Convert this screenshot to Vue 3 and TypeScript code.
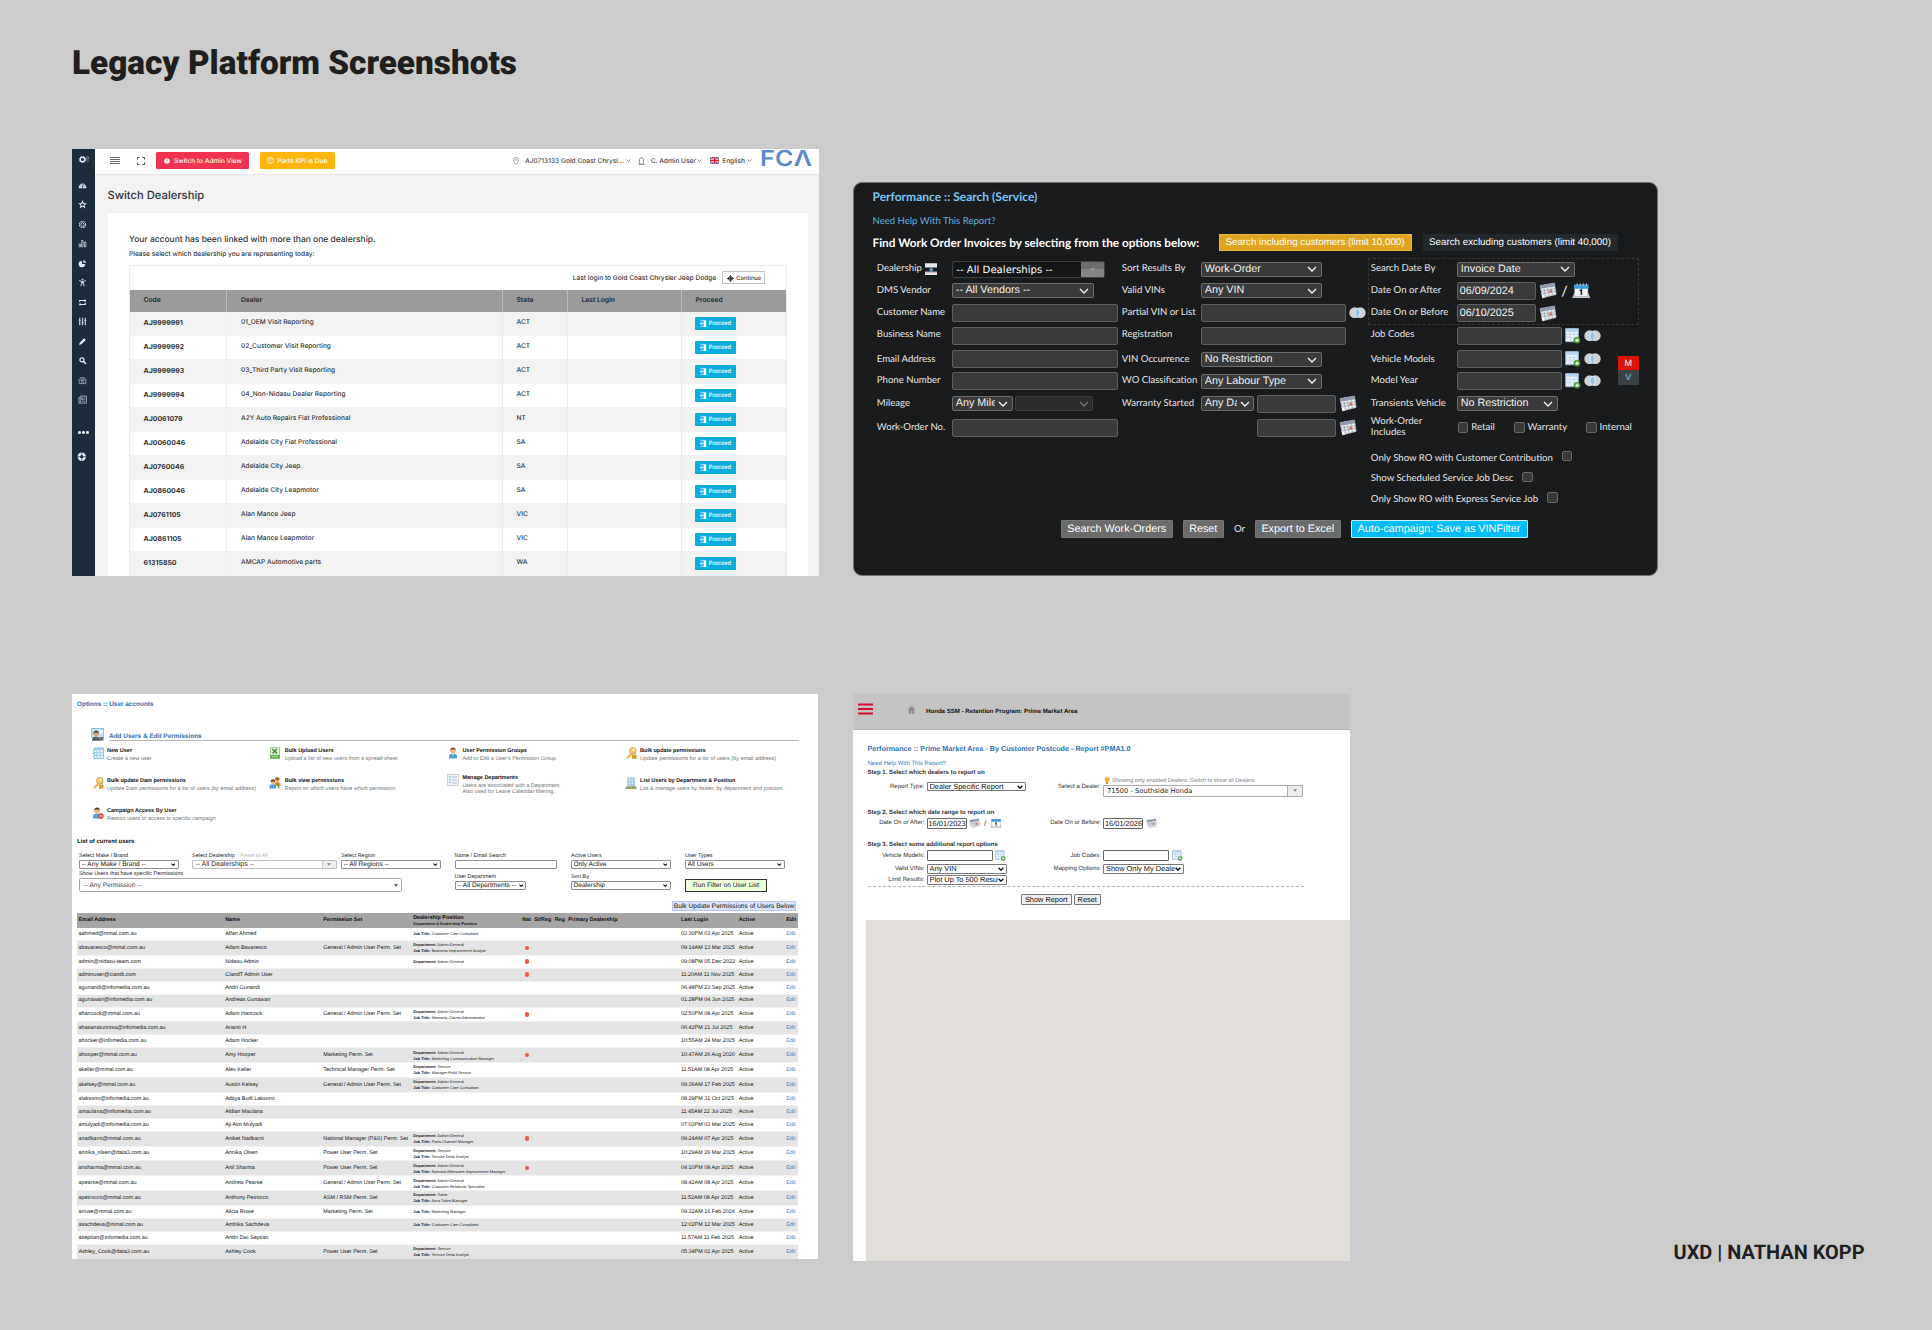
<script setup lang="ts">
interface Dealer { code: string; name: string; state: string }
interface User {
  email: string
  name: string
  perm?: string
  dept?: string
  job?: string
  nat?: boolean
  login: string
}
interface Tool { icon: string; title: string; lines: string[] }

const sideIcons: string[] = [
  'gauge', 'star', 'aperture', 'bars', 'pie', 'person', 'repeat', 'sliders', 'pencil', 'search', 'card', 'news',
]

const dealers: Dealer[] = [
  { code: 'AJ9999991', name: '01_OEM Visit Reporting', state: 'ACT' },
  { code: 'AJ9999992', name: '02_Customer Visit Reporting', state: 'ACT' },
  { code: 'AJ9999993', name: '03_Third Party Visit Reporting', state: 'ACT' },
  { code: 'AJ9999994', name: '04_Non-Nidasu Dealer Reporting', state: 'ACT' },
  { code: 'AJ0061079', name: 'A2Y Auto Repairs Fiat Professional', state: 'NT' },
  { code: 'AJ0060046', name: 'Adelaide City Fiat Professional', state: 'SA' },
  { code: 'AJ0760046', name: 'Adelaide City Jeep', state: 'SA' },
  { code: 'AJ0860046', name: 'Adelaide City Leapmotor', state: 'SA' },
  { code: 'AJ0761105', name: 'Alan Mance Jeep', state: 'VIC' },
  { code: 'AJ0861105', name: 'Alan Mance Leapmotor', state: 'VIC' },
  { code: '61315850', name: 'AMCAP Automotive parts', state: 'WA' },
]

const tools: Tool[] = [
  { icon: 'newuser', title: 'New User', lines: ['Create a new user'] },
  { icon: 'xls', title: 'Bulk Upload Users', lines: ['Upload a list of new users from a spread-sheet'] },
  { icon: 'user', title: 'User Permission Groups', lines: ["Add or Edit a User's Permission Group"] },
  { icon: 'key', title: 'Bulk update permissions', lines: ['Update permissions for a list of users (by email address)'] },
  { icon: 'key', title: 'Bulk update Dam permissions', lines: ['Update Dam permissions for a list of users (by email address)'] },
  { icon: 'group', title: 'Bulk view permissions', lines: ['Report on which users have which permission'] },
  { icon: 'list', title: 'Manage Departments', lines: ['Users are associated with a Department.', 'Also used for Leave Calendar filtering.'] },
  { icon: 'building', title: 'List Users by Department & Position', lines: ['List & manage users by dealer, by department and position.'] },
  { icon: 'restrict', title: 'Campaign Access By User', lines: ['Restrict users to access to specific campaign'] },
]

const gen = 'General / Admin User Perm. Set'
const users: User[] = [
  { email: 'aahmed@mmal.com.au', name: 'Affan Ahmed', job: 'Customer Care Consultant', login: '03:30PM 03 Apr 2025' },
  { email: 'abavaresco@mmal.com.au', name: 'Adam Bavaresco', perm: gen, dept: 'Admin-General', job: 'Business Improvement Analyst', nat: true, login: '09:14AM 13 Mar 2025' },
  { email: 'admin@nidasu-team.com', name: 'Nidasu Admin', dept: 'Admin-General', nat: true, login: '09:08PM 05 Dec 2022' },
  { email: 'adminuser@ciandt.com', name: 'CIandT Admin User', nat: true, login: '11:20AM 11 Nov 2025' },
  { email: 'agunandi@infomedia.com.au', name: 'Andri Gunandi', login: '06:48PM 23 Sep 2025' },
  { email: 'agunawan@infomedia.com.au', name: 'Andreas Gunawan', login: '01:28PM 04 Jun 2025' },
  { email: 'ahancock@mmal.com.au', name: 'Adam Hancock', perm: gen, dept: 'Admin-General', job: 'Warranty Claims Administrator', nat: true, login: '02:50PM 08 Apr 2025' },
  { email: 'ahasanatunnisa@infomedia.com.au', name: 'Arianti H', login: '06:42PM 21 Jul 2025' },
  { email: 'ahocker@infomedia.com.au', name: 'Adam Hocker', login: '10:55AM 24 Mar 2025' },
  { email: 'ahooper@mmal.com.au', name: 'Amy Hooper', perm: 'Marketing Perm. Set', dept: 'Admin-General', job: 'Marketing Communication Manager', nat: true, login: '10:47AM 26 Aug 2020' },
  { email: 'akeller@mmal.com.au', name: 'Alex Keller', perm: 'Technical Manager Perm. Set', dept: 'Service', job: 'Manager Field Service', login: '11:51AM 08 Apr 2025' },
  { email: 'akelsey@mmal.com.au', name: 'Austin Kelsey', perm: gen, dept: 'Admin-General', job: 'Customer Care Consultant', login: '09:36AM 17 Feb 2025' },
  { email: 'alaksono@infomedia.com.au', name: 'Aditya Budi Laksono', login: '08:29PM 31 Oct 2025' },
  { email: 'amaulana@infomedia.com.au', name: 'Aldian Maulana', login: '11:45AM 22 Jul 2025' },
  { email: 'amulyadi@infomedia.com.au', name: 'Aji Atin Mulyadi', login: '07:03PM 03 Mar 2025' },
  { email: 'anadkarni@mmal.com.au', name: 'Aniket Nadkarni', perm: 'National Manager (P&S) Perm. Set', dept: 'Admin-General', job: 'Parts Channel Manager', nat: true, login: '09:24AM 07 Apr 2025' },
  { email: 'annika_olsen@data3.com.au', name: 'Annika Olsen', perm: 'Power User Perm. Set', dept: 'Service', job: 'Service Desk Analyst', login: '10:29AM 26 Mar 2025' },
  { email: 'ansharma@mmal.com.au', name: 'Anil Sharma', perm: 'Power User Perm. Set', dept: 'Admin-General', job: 'National Aftersales Improvement Manager', nat: true, login: '04:10PM 08 Apr 2025' },
  { email: 'apearse@mmal.com.au', name: 'Andrew Pearse', perm: gen, dept: 'Admin-General', job: 'Customer Relations Specialist', login: '08:42AM 08 Apr 2025' },
  { email: 'apetrocco@mmal.com.au', name: 'Anthony Petrocco', perm: 'ASM / RSM Perm. Set', dept: 'Sales', job: 'Area Sales Manager', login: '11:52AM 08 Apr 2025' },
  { email: 'arowe@mmal.com.au', name: 'Alicia Rowe', perm: 'Marketing Perm. Set', job: 'Marketing Manager', login: '09:32AM 16 Feb 2024' },
  { email: 'asachdeva@mmal.com.au', name: 'Ambika Sachdeva', job: 'Customer Care Consultant', login: '12:02PM 12 Mar 2025' },
  { email: 'aseptian@infomedia.com.au', name: 'Andri Dwi Septian', login: '11:57AM 11 Feb 2025' },
  { email: 'Ashley_Cook@data3.com.au', name: 'Ashley Cook', perm: 'Power User Perm. Set', dept: 'Service', job: 'Service Desk Analyst', login: '05:34PM 02 Apr 2025' },
]
</script>

<template>
  <svg class="defs" width="0" height="0" aria-hidden="true">
    <symbol id="chev" viewBox="0 0 10 6"><path d="M1 1l4 4 4-4" fill="none" stroke="currentColor" stroke-width="1.4" /></symbol>
    <symbol id="chevb" viewBox="0 0 10 6"><path d="M1 1l4 4 4-4" fill="none" stroke="currentColor" stroke-width="2.3" /></symbol>
    <symbol id="tri" viewBox="0 0 6 4"><path d="M0 0h6L3 4z" fill="currentColor" /></symbol>
    <symbol id="gear" viewBox="0 0 24 16">
      <circle cx="9" cy="9" r="4.6" fill="none" stroke="#dfe5e8" stroke-width="3" />
      <circle cx="9" cy="9" r="6.6" fill="none" stroke="#dfe5e8" stroke-width="1.6" stroke-dasharray="2.6 2.6" />
      <circle cx="19" cy="5.5" r="2.4" fill="none" stroke="#93a1aa" stroke-width="1.6" />
      <circle cx="19" cy="11.5" r="1.8" fill="none" stroke="#6f808a" stroke-width="1.4" />
    </symbol>
    <symbol id="gauge" viewBox="0 0 16 16"><path d="M1 13a7 8.5 0 1 1 14 0z" fill="#d9dfe2" /><path d="M8 12L9 6M4 9h.5M11.500 9h.5M5.500 6h.5" stroke="#1b2d3a" stroke-width="1.700" /></symbol>
    <symbol id="star" viewBox="0 0 16 16"><path d="M8 2.500l1.600 3.700 4 .3-3 2.600 1 4L8 10.900l-3.600 2.200 1-4-3-2.600 4-.3z" fill="none" stroke="#d9dfe2" stroke-width="1.900" /></symbol>
    <symbol id="aperture" viewBox="0 0 16 16"><circle cx="8" cy="8" r="5.500" fill="none" stroke="#c3ccd1" stroke-width="2" stroke-dasharray="3.400 1" /><path d="M8 5l3 2-1 4H6L5 7z" fill="none" stroke="#c3ccd1" stroke-width="1.400" /></symbol>
    <symbol id="bars" viewBox="0 0 16 16"><path d="M2 9h2.500v5H2zM6.500 2.500h2.500V14H6.500zM11.500 5.500H14V14h-2.500z" fill="none" stroke="#d9dfe2" stroke-width="1.300" /></symbol>
    <symbol id="pie" viewBox="0 0 16 16"><path d="M7 3.500V9h6A6 5.500 0 1 1 7 3.500z" fill="#e6eaec" /><path d="M9 2a5.500 5.500 0 0 1 5.500 5.200H9z" fill="#aab5bb" /></symbol>
    <symbol id="person" viewBox="0 0 16 16"><circle cx="8" cy="2.600" r="1.700" fill="#d9dfe2" /><path d="M2 4.500l4.500 1.800h3L14 4.500M6.500 6.500v3l-1.500 5M9.500 6.500v3l1.500 5M8 6v4" fill="none" stroke="#d9dfe2" stroke-width="1.700" /></symbol>
    <symbol id="repeat" viewBox="0 0 16 16"><path d="M3 7V4.500h11M13 9v2.500H2M3.500 13.500V9.500M12.500 2.500v5" fill="none" stroke="#e3e8ea" stroke-width="2" /></symbol>
    <symbol id="sliders" viewBox="0 0 16 16"><path d="M3 1.500v13M8 1.500v13M13 1.500v13" stroke="#c3ccd1" stroke-width="2.200" /><path d="M1 6h4M6 10h4M11 6h4" stroke="#c3ccd1" stroke-width="1.500" /></symbol>
    <symbol id="pencil" viewBox="0 0 16 16"><path d="M2 14l1-3.800 8-8L14 5l-8 8z" fill="#eef1f2" /></symbol>
    <symbol id="search" viewBox="0 0 16 16"><circle cx="7" cy="7" r="3.600" fill="none" stroke="#e3e8ea" stroke-width="2.200" /><path d="M9.500 9.500L14 14" stroke="#e3e8ea" stroke-width="2.600" /></symbol>
    <symbol id="card" viewBox="0 0 16 16"><path d="M2 5.500h12v8H2zM4 3h8M5 8h6M5 10.800h6" fill="none" stroke="#a8b4bb" stroke-width="1.400" /></symbol>
    <symbol id="news" viewBox="0 0 16 16"><path d="M4 2h11v12.500H1.500V5H4zM4 5v9M6.500 5H9v3H6.500zM11 5h2M11 8h2M6.500 11H13" fill="none" stroke="#b5c0c6" stroke-width="1.400" /></symbol>
    <symbol id="buoy" viewBox="0 0 16 16"><circle cx="8" cy="8" r="5" fill="none" stroke="#eef1f2" stroke-width="4" /><path d="M8 1v4M8 11v4M1 8h4M11 8h4" stroke="#1b2d3a" stroke-width="1.200" /></symbol>
    <symbol id="cal" viewBox="0 0 18 17">
      <path d="M1 3.500L15.500 1l1.700 11.500L3.500 16z" fill="#e9ecef" stroke="#a9aeb5" stroke-width=".6" />
      <path d="M1 3.500L15.500 1l.5 3.200L1.500 6.800z" fill="#8d9bb0" />
      <path d="M2 9.300l14-2.600M2.800 12l13.800-3M5 6.500l1.500 8.500M8.500 5.800l1.500 8.300M12 5.200l1.500 8" stroke="#9aa1aa" stroke-width=".8" />
      <circle cx="11.600" cy="9.300" r="1.500" fill="#e0705c" />
      <path d="M3.500 16L2.500 11l3.500 4.300z" fill="#fff" />
    </symbol>
    <symbol id="cal1" viewBox="0 0 18 15">
      <path d="M0 14.700L2.500 9h13l2.500 5.700z" fill="#c4c8cc" />
      <path d="M2.500 2.500H15.500V13H2.500z" fill="#f7f9fa" stroke="#8c949c" stroke-width=".5" />
      <path d="M2 1.500H16v4H2z" fill="#3f9bd6" />
      <path d="M5 .3v2.400M8 .3v2.400M11 .3v2.400M14 .3v2.400" stroke="#dfe9f0" stroke-width=".8" />
      <path d="M7.500 7.700l1.700-1v5" fill="none" stroke="#222" stroke-width="1.500" />
    </symbol>
    <symbol id="sheet" viewBox="0 0 16 16">
      <path d="M.7.700h12.600v13H.7z" fill="#eaf3fb" stroke="#8fb4dc" stroke-width="1" />
      <path d="M.7.700h12.600v3H.7z" fill="#b7d2ee" />
      <path d="M1 6.500h12M1 9.200h12M5 3.700v10M9 3.700v10" stroke="#b9d1ea" stroke-width=".7" />
      <circle cx="12" cy="12.300" r="3.300" fill="#4c9a34" /><path d="M12 10.500v3.600M10.200 12.300h3.600" stroke="#fff" stroke-width="1.200" />
    </symbol>
    <symbol id="venn" viewBox="0 0 18 12"><circle cx="6" cy="6" r="5.700" fill="#cdd1d5" /><circle cx="12" cy="6" r="5.700" fill="#cdd1d5" /><path d="M9 1.200a5.700 5.700 0 0 1 0 9.600 5.700 5.700 0 0 1 0-9.600z" fill="#8fc4ee" stroke="#f2f4f6" stroke-width=".8" /></symbol>
    <symbol id="org" viewBox="0 0 12 12"><path d="M0 .3h12v4H0zM0 8.300h12v3.500H0z" fill="#e6e9ec" /><path d="M0 8.300h12v1H0z" fill="#d8a7a0" /><path d="M6 4v4.500M4.200 6.300h3.600" stroke="#5aa0dc" stroke-width="1.600" /></symbol>
    <symbol id="user" viewBox="0 0 12 12"><path d="M2 11.500V9c0-1.500 1.500-2.500 4-2.500S10 7.500 10 9v2.500z" fill="#4f9fe0" /><path d="M4.500 6.300L6 8.300l1.500-2z" fill="#fff" /><circle cx="6" cy="3.800" r="2.700" fill="#f0b982" /><path d="M3.200 4C3 1.500 4.500.4 6 .4S9 1.500 8.800 4L8 2.600H4.200z" fill="#7a4a1c" /></symbol>
    <symbol id="group" viewBox="0 0 12 12"><path d="M5.500 9V7c0-1.500 1.500-2 3-2s3 .8 3 2v2z" fill="#e79a2e" /><circle cx="8.300" cy="2.800" r="2.100" fill="#d9924e" /><path d="M6 2.500c0-1.500 1-2.300 2.300-2.300s2.400.8 2.300 2.300z" fill="#8a5a1c" /><path d="M.5 11.500V9.300c0-1.300 1.300-2 3.300-2s3.300.7 3.300 2v2.200z" fill="#4f9fe0" /><circle cx="3.900" cy="5" r="2.200" fill="#f0b982" /><path d="M1.600 4.800C1.500 3 2.600 2.300 3.900 2.300s2.500.8 2.300 2.500z" fill="#7a4a1c" /><path d="M8 6l2 5" stroke="#5b9a4a" stroke-width="1.500" /></symbol>
    <symbol id="key" viewBox="0 0 12 12"><path d="M6 5.500L1 10.500l1 1h1.500l3.800-4z" fill="#eebb55" /><circle cx="7.800" cy="3.800" r="3.400" fill="#f3c567" stroke="#d79b30" stroke-width=".6" /><circle cx="8.600" cy="3" r="1" fill="#fff" /><path d="M7 8h4.500v3.700H7z" fill="#d99a1d" /><path d="M8 8V6.700h2.500V8" fill="none" stroke="#999" stroke-width=".7" /></symbol>
    <symbol id="restrict" viewBox="0 0 12 12"><path d="M1 11.500V9c0-1.500 1.500-2.500 4-2.500S9 7.500 9 9v2.500z" fill="#4f9fe0" /><circle cx="5" cy="3.800" r="2.700" fill="#f0b982" /><path d="M2.200 4C2 1.500 3.500.4 5 .4S8 1.500 7.800 4L7 2.600H3.200z" fill="#5a3513" /><circle cx="9" cy="9" r="2.700" fill="#e2382b" /><path d="M7.500 9h3" stroke="#fff" stroke-width="1" /></symbol>
    <symbol id="newuser" viewBox="0 0 12 12"><path d="M2 1h9.500v10.500H2z" fill="#eaf6fd" stroke="#5fb1da" stroke-width=".7" /><path d="M2 1h9.500v2H2z" fill="#93cdea" /><path d="M2 5.500h9.500M2 8.300h9.500M5 3v8.500M8 3v8.500M0 6.500h3" stroke="#7cbfe2" stroke-width=".7" /></symbol>
    <symbol id="xls" viewBox="0 0 12 12"><path d="M1.500.5h9v11h-9z" fill="#dff0d8" stroke="#6fae5c" stroke-width=".6" /><path d="M3.500 2l4.500 4.500M8 2L3.500 6.500" stroke="#3c8a34" stroke-width="1.500" /><path d="M1.200 8h9.600v3.500H1.200z" fill="#54b33c" /><path d="M3 9.700h6" stroke="#dff0d8" stroke-width="1" stroke-dasharray="1.400 .6" /></symbol>
    <symbol id="list" viewBox="0 0 12 12"><path d="M.4.4h11.200v11.200H.4z" fill="#eef2f5" stroke="#bcc3c9" stroke-width=".8" /><path d="M5 3h5M5 6h5M5 9h5" stroke="#aab4bc" stroke-width=".8" /><path d="M3 2v8" stroke="#76b0e0" stroke-width="1.200" stroke-dasharray="1.500 1.200" /></symbol>
    <symbol id="building" viewBox="0 0 12 12"><path d="M2 .4h8V10H2z" fill="#a9c7e6" /><path d="M2.300 2.500h7.400M2.300 4.500h7.400M2.300 6.500h7.400M4.500.4V9M7.500.4V9" stroke="#d7e5f3" stroke-width=".5" /><path d="M.5 9.500h11V12H.5z" fill="#7fb25c" /><path d="M3 9.500h1.800V12H3zM7.300 9.500H9V12H7.300z" fill="#c98244" /></symbol>
    <symbol id="admin" viewBox="0 0 13 13"><path d="M.4.500h12.200v9H.4z" fill="#bfe0f2" stroke="#6fa9c9" stroke-width=".7" /><path d="M8 3h4M8 5h4" stroke="#fff" stroke-width="1" /><path d="M1 12.800c0-3 1.500-4 4-4s4.500 1 4.500 4z" fill="#555b63" /><path d="M9 9l3.500 0v3.500H9z" fill="#6b7077" /><circle cx="5.200" cy="6" r="2.600" fill="#d9a878" /><path d="M2.400 6C2.300 3.500 3.700 2.800 5.200 2.800S8 3.600 7.900 6L7 4.600H3.600z" fill="#3f2d1d" /></symbol>
    <symbol id="door" viewBox="0 0 12 12"><path d="M6.500.5H11v10L7 12V2z" fill="#fff" /><path d="M.5 5.500H5M3.500 3l2 2.500-2 2.500" fill="none" stroke="#fff" stroke-width="1.300" /><path d="M2.500 2V.8H7M2.500 9v1.300H7" fill="none" stroke="#fff" stroke-width=".9" /></symbol>
  </svg>

  <main class="board">
    <h1 class="heading">Legacy Platform Screenshots</h1>

    <div class="row first">
      <!-- Dealership switcher -->
      <section class="shot dealer">
        <nav class="side">
          <div class="logo"><svg width="12" height="8"><use href="#gear" /></svg></div>
          <div v-for="i in sideIcons" :key="i" class="s-ic"><svg width="9" height="9"><use :href="'#' + i" /></svg></div>
          <div class="dots"><i /><i /><i /></div>
          <div class="s-ic"><svg width="9.500" height="9.500"><use href="#buoy" /></svg></div>
        </nav>
        <div class="main">
          <header class="top">
            <svg class="burger" width="10" height="9" viewBox="0 0 10 9"><path d="M0 1.500h10M0 3.500h10M0 5.500h10M0 7.500h10" stroke="#555" stroke-width=".9" /></svg>
            <svg class="full" width="8" height="8" viewBox="0 0 8 8"><path d="M.5 2.500v-2h2M5.500.5h2v2M7.500 5.500v2h-2M2.500 7.500h-2v-2" fill="none" stroke="#444" stroke-width="1" /></svg>
            <button class="tb red"><svg width="6" height="6" viewBox="0 0 6 6"><circle cx="3" cy="3" r="2.800" fill="#fff" /><path d="M3 1.300v2M3 4v.8" stroke="#ef3350" stroke-width=".9" /></svg><span>Switch to Admin View</span></button>
            <button class="tb amber"><svg width="7" height="7" viewBox="0 0 7 7"><circle cx="3.500" cy="3.500" r="3" fill="none" stroke="#fff" stroke-width=".8" /><path d="M3.500 1.600v2.300M3.500 4.600v.8" stroke="#fff" stroke-width=".8" /></svg><span>Parts KPI is Due</span></button>
            <svg class="pin" width="6" height="8" viewBox="0 0 6 8"><path d="M3 7.500C1 5 .5 4 .5 2.900a2.500 2.500 0 0 1 5 0C5.500 4 5 5 3 7.500z" fill="none" stroke="#888" stroke-width=".7" /><circle cx="3" cy="2.900" r=".8" fill="#888" /></svg>
            <span class="t1">AJ0713133 Gold Coast Chrysl...</span>
            <svg class="cv" width="5" height="3"><use href="#chev" /></svg>
            <svg class="usr" width="7" height="8" viewBox="0 0 7 8"><path d="M.3 7.300h6.400M1.800 7V5.500C.9 4 1.200.7 3.500.7S6.100 4 5.200 5.500V7" fill="none" stroke="#666" stroke-width=".8" /></svg>
            <span class="t2">C. Admin User</span>
            <svg class="cv" width="5" height="3"><use href="#chev" /></svg>
            <svg class="flag" width="9.500" height="7" viewBox="0 0 10 8" preserveAspectRatio="none"><path d="M0 0h10v8H0z" fill="#223a82" /><path d="M0 0l10 8M10 0L0 8" stroke="#fff" stroke-width="1.300" /><path d="M0 0l10 8M10 0L0 8" stroke="#d0222f" stroke-width=".6" /><path d="M5 0v8M0 4h10" stroke="#fff" stroke-width="2.700" /><path d="M5 0v8M0 4h10" stroke="#d0222f" stroke-width="1.700" /></svg>
            <span class="t3">English</span>
            <svg class="cv" width="5" height="3"><use href="#chev" /></svg>
            <b class="fca">FCΛ</b>
          </header>
          <h2>Switch Dealership</h2>
          <div class="card">
            <p class="lead">Your account has been linked with more than one dealership.</p>
            <p class="sub">Please select which dealership you are representing today:</p>
            <div class="tbl">
              <div class="last"><span>Last login to Gold Coast Chrysler Jeep Dodge</span><button><svg width="7" height="7" viewBox="0 0 7 7"><circle cx="3.500" cy="3.500" r="2.100" fill="#777" stroke="#444" stroke-width=".9" /><path d="M3.500 0v7M0 3.500h7" stroke="#444" stroke-width="1" /></svg>Continue</button></div>
              <div class="tr th"><span>Code</span><span>Dealer</span><span>State</span><span>Last Login</span><span>Proceed</span></div>
              <div v-for="d in dealers" :key="d.code" class="tr">
                <b>{{ d.code }}</b><span>{{ d.name }}</span><span>{{ d.state }}</span><span />
                <span><button class="go"><svg width="8" height="7.500"><use href="#door" /></svg>Proceed</button></span>
              </div>
            </div>
          </div>
        </div>
      </section>

      <!-- Work order search -->
      <section class="shot search">
        <h2>Performance :: Search (Service)</h2>
        <a class="help">Need Help With This Report?</a>
        <div class="find"><b>Find Work Order Invoices by selecting from the options below:</b><button class="gold">Search including customers (limit 10,000)</button><button class="slate">Search excluding customers (limit 40,000)</button></div>
        <div class="cols">
          <div class="c c1">
            <div class="f h22"><label>Dealership <svg class="org" width="12.500" height="12.500"><use href="#org" /></svg></label><div class="combo"><span>-- All Dealerships --</span><i><svg width="5" height="3"><use href="#tri" /></svg></i></div></div>
            <div class="f h21"><label>DMS Vendor</label><div class="sel w142"><span>-- All Vendors --</span><svg><use href="#chev" /></svg></div></div>
            <div class="f h24"><label>Customer Name</label><div class="inp w166" /></div>
            <div class="f h22"><label class="up">Business Name</label><div class="inp w166" /></div>
            <div class="f h23"><label class="dn">Email Address</label><div class="inp w166" /></div>
            <div class="f h22"><label>Phone Number</label><div class="inp w166" /></div>
            <div class="f h23"><label>Mileage</label><div class="sel w61"><span>Any Mileage</span><svg><use href="#chev" /></svg></div><div class="sel off w78"><span /><svg><use href="#chev" /></svg></div></div>
            <div class="f h25"><label>Work-Order No.</label><div class="inp w166" /></div>
          </div>
          <div class="c c2">
            <div class="f h22"><label>Sort Results By</label><div class="sel w121"><span>Work-Order</span><svg><use href="#chev" /></svg></div></div>
            <div class="f h21"><label>Valid VINs</label><div class="sel w121"><span>Any VIN</span><svg><use href="#chev" /></svg></div></div>
            <div class="f h24"><label>Partial VIN or List</label><div class="inp w145" /><svg class="vn" width="17" height="11.500"><use href="#venn" /></svg></div>
            <div class="f h22"><label class="up">Registration</label><div class="inp w145" /></div>
            <div class="f h23"><label class="dn">VIN Occurrence</label><div class="sel w121 dn"><span>No Restriction</span><svg><use href="#chev" /></svg></div></div>
            <div class="f h22"><label>WO Classification</label><div class="sel w121"><span>Any Labour Type</span><svg><use href="#chev" /></svg></div></div>
            <div class="f h23"><label>Warranty Started</label><div class="sel w53"><span>Any Date</span><svg><use href="#chev" /></svg></div><div class="inp w79 nx" /><svg class="cal" width="18" height="17"><use href="#cal" /></svg></div>
            <div class="f h25"><label /><div class="inp w79 far" /><svg class="cal" width="18" height="17"><use href="#cal" /></svg></div>
          </div>
          <div class="c c3">
            <div class="box">
              <div class="f h22"><label>Search Date By</label><div class="sel w118"><span>Invoice Date</span><svg><use href="#chev" /></svg></div></div>
              <div class="f h21"><label>Date On or After</label><div class="inp w79">06/09/2024</div><svg class="cal" width="18" height="17"><use href="#cal" /></svg><em>/</em><svg class="cal1" width="18.500" height="15.500"><use href="#cal1" /></svg></div>
              <div class="f h24"><label>Date On or Before</label><div class="inp w79">06/10/2025</div><svg class="cal" width="18" height="17"><use href="#cal" /></svg></div>
            </div>
            <div class="f h22"><label class="up">Job Codes</label><div class="inp w105" /><svg class="sh" width="16" height="16"><use href="#sheet" /></svg><svg class="vn" width="17" height="11.500"><use href="#venn" /></svg></div>
            <div class="f h23"><label class="dn">Vehicle Models</label><div class="inp w105" /><svg class="sh" width="16" height="16"><use href="#sheet" /></svg><svg class="vn" width="17" height="11.500"><use href="#venn" /></svg></div>
            <div class="f h22"><label>Model Year</label><div class="inp w105" /><svg class="sh" width="16" height="16"><use href="#sheet" /></svg><svg class="vn" width="17" height="11.500"><use href="#venn" /></svg></div>
            <div class="f h23"><label>Transients Vehicle</label><div class="sel w101"><span>No Restriction</span><svg><use href="#chev" /></svg></div></div>
            <div class="f h25"><label class="two">Work-Order<br>Includes</label><div class="cks"><span><i />Retail</span><span><i />Warranty</span><span><i />Internal</span></div></div>
            <div class="opts">
              <div>Only Show RO with Customer Contribution<i /></div>
              <div>Show Scheduled Service Job Desc<i /></div>
              <div>Only Show RO with Express Service Job<i /></div>
            </div>
            <div class="mv"><span>M</span><span>V</span></div>
          </div>
        </div>
        <div class="acts"><button>Search Work-Orders</button><button>Reset</button><span>Or</span><button>Export to Excel</button><button class="cyan">Auto-campaign: Save as VINFilter</button></div>
      </section>
    </div>

    <div class="row second">
      <!-- User accounts -->
      <section class="shot accounts">
        <h2>Options :: User accounts</h2>
        <div class="title"><svg width="13" height="13"><use href="#admin" /></svg><h3>Add Users &amp; Edit Permissions</h3></div>
        <div class="tools">
          <div v-for="t in tools" :key="t.title" class="tool" :class="{ tall: t.lines.length > 1 }">
            <svg width="12" height="12"><use :href="'#' + t.icon" /></svg>
            <div><b>{{ t.title }}</b><p v-for="l in t.lines" :key="l">{{ l }}</p></div>
          </div>
        </div>
        <h4>List of current users</h4>
        <div class="filters">
          <div class="left">
            <div class="trio">
              <div class="g"><label>Select Make / Brand</label><div class="ls w100"><span>-- Any Make / Brand --</span><svg><use href="#chevb" /></svg></div></div>
              <div class="g"><label>Select Dealership <em>Reset to All</em></label><div class="lc"><span>-- All Dealerships --</span><i><svg width="4" height="3"><use href="#tri" /></svg></i></div></div>
              <div class="g"><label>Select Region</label><div class="ls w100"><span>-- All Regions --</span><svg><use href="#chevb" /></svg></div></div>
            </div>
            <label class="pl">Show Users that have specific Permissions</label>
            <div class="perm"><span>-- Any Permission --</span><svg width="4" height="3"><use href="#tri" /></svg></div>
          </div>
          <div class="fcol n1">
            <div class="g"><label>Name / Email Search</label><div class="ls w102" /></div>
            <div class="g"><label>User Department</label><div class="ls w71"><span>-- All Departments --</span><svg><use href="#chevb" /></svg></div></div>
          </div>
          <div class="fcol n2">
            <div class="g"><label>Active Users</label><div class="ls w100"><span>Only Active</span><svg><use href="#chevb" /></svg></div></div>
            <div class="g"><label>Sort By</label><div class="ls w100"><span>Dealership</span><svg><use href="#chevb" /></svg></div></div>
          </div>
          <div class="fcol n3">
            <div class="g"><label>User Types</label><div class="ls w100"><span>All Users</span><svg><use href="#chevb" /></svg></div></div>
            <button class="run">Run Filter on User List</button>
          </div>
        </div>
        <button class="bulk">Bulk Update Permissions of Users Below</button>
        <div class="users">
          <div class="u hd"><span>Email Address</span><span>Name</span><span>Permission Set</span><span>Dealership Position<small>Department &amp; Dealership Position</small></span><span>Nat</span><span>St/Reg</span><span>Reg</span><span>Primary Dealership</span><span>Last Login</span><span>Active</span><span>Edit</span></div>
          <div v-for="u in users" :key="u.email" class="u" :class="{ dbl: u.dept && u.job }">
            <span>{{ u.email }}</span><span>{{ u.name }}</span><span>{{ u.perm }}</span>
            <span class="pos"><small v-if="u.dept"><b>Department:</b> {{ u.dept }}</small><small v-if="u.job"><b>Job Title:</b> {{ u.job }}</small></span>
            <span><i v-if="u.nat" class="dot" /></span><span /><span /><span />
            <span>{{ u.login }}</span><span>Active</span><a>Edit</a>
          </div>
        </div>
      </section>

      <!-- Prime market area report -->
      <section class="shot pma">
        <header>
          <svg class="hb" width="15" height="12" viewBox="0 0 15 12"><path d="M0 1.500h15M0 6h15M0 10.500h15" stroke="#d21034" stroke-width="2.200" /></svg>
          <svg class="home" width="7" height="8" viewBox="0 0 7 8"><path d="M0 3.500L3.500.5 7 3.500M1 3.500v4h1.700V5h1.600v2.500H6v-4z" fill="#8c8c8c" stroke="#8c8c8c" stroke-width=".6" /></svg>
          <b>Honda SSM - Retention Program: Prime Market Area</b>
        </header>
        <div class="body">
          <h2>Performance :: Prime Market Area - By Customer Postcode - Report #PMA1.0</h2>
          <a class="help">Need Help With This Report?</a>
          <h3 class="s1">Step 1. Select which dealers to report on</h3>
          <div class="pr h20">
            <label>Report Type:</label><div class="ps w99"><span>Dealer Specific Report</span><svg><use href="#chevb" /></svg></div>
            <label>Select a Dealer:</label>
            <div class="dealerpick">
              <p><svg width="6" height="7" viewBox="0 0 6 7"><circle cx="3" cy="2.500" r="2.400" fill="#f5b031" /><path d="M2 4.500h2V7H2z" fill="#d9953a" /></svg>Showing only enabled Dealers. Switch to show all Dealers.</p>
              <div class="pc"><span>71500 - Southside Honda</span><i><svg width="4" height="3"><use href="#tri" /></svg></i></div>
            </div>
          </div>
          <h3 class="s2">Step 2. Select which date range to report on</h3>
          <div class="pr h11">
            <label>Date On or After:</label><div class="fx"><div class="pi w40">16/01/2023</div><svg width="11.500" height="11"><use href="#cal" /></svg><em>/</em><svg width="12" height="10"><use href="#cal1" /></svg></div>
            <label>Date On or Before:</label><div class="fx"><div class="pi w40">16/01/2026</div><svg width="11.500" height="11"><use href="#cal" /></svg></div>
          </div>
          <h3 class="s3">Step 3. Select some additional report options</h3>
          <div class="pr h11">
            <label>Vehicle Models:</label><div class="fx"><div class="pi w66" /><svg width="11" height="11"><use href="#sheet" /></svg></div>
            <label>Job Codes:</label><div class="fx"><div class="pi w66" /><svg width="11" height="11"><use href="#sheet" /></svg></div>
          </div>
          <div class="pr h9 m3">
            <label>Valid VINs:</label><div class="ps w80"><span>Any VIN</span><svg><use href="#chevb" /></svg></div>
            <label>Mapping Options:</label><div class="ps w81"><span>Show Only My Dealers</span><svg><use href="#chevb" /></svg></div>
          </div>
          <div class="pr h9 m2">
            <label>Limit Results:</label><div class="ps w80"><span>Plot Up To 500 Results</span><svg><use href="#chevb" /></svg></div>
          </div>
          <div class="rule" />
          <div class="pb"><button>Show Report</button><button>Reset</button></div>
        </div>
        <div class="blank" />
      </section>

      <p class="author">UXD | NATHAN KOPP</p>
    </div>
  </main>
</template>

<style>
body { margin: 0; background: #ccc; }
</style>

<style scoped>
* { box-sizing: border-box; margin: 0; padding: 0; }
.defs { position: absolute; }
svg { flex: none; display: block; }
button { border: 0; font: inherit; color: inherit; white-space: nowrap; text-rendering: inherit; }
i, em { font-style: normal; }
.board { width: 1932px; height: 1330px; background: #ccc; padding-left: 72px; overflow: hidden; font-family: "Liberation Sans", Arial, sans-serif; text-rendering: geometricPrecision; }
.heading { font: 900 33.3px/40px Roboto, sans-serif; color: #1f1f1f; padding-top: 44px; height: 149px; white-space: nowrap; }
.row { display: flex; }
.first { height: 427px; align-items: flex-end; }
.second { margin-top: 118px; height: 566px; }
.shot { overflow: hidden; flex: none; white-space: nowrap; }

/* dealership switcher */
.dealer { width: 747px; height: 427px; display: flex; font-family: Inter, sans-serif; font-size: 6.6px; font-weight: 450; color: #303438; background: #f2f2f2; }
.side { width: 23px; background: #1b2d3a; flex: none; }
.logo { height: 26.3px; display: flex; align-items: center; justify-content: center; padding-bottom: 6px; }
.s-ic { height: 19.5px; display: flex; align-items: center; justify-content: center; padding-right: 3px; }
.dots { display: flex; gap: 1.5px; padding: 22px 0 12px 6px; height: 38px; }
.dots i { width: 2.7px; height: 2.7px; border-radius: 50%; background: #e3e8ea; }
.main { flex: 1; }
.top { height: 26px; background: #fff; border-bottom: 1px solid #e6e6e6; display: flex; align-items: center; padding: 0 0 2px 14.5px; color: #44494e; }
.full { margin: 1px 10.500px 0 17.500px; }
.tb { height: 17px; border-radius: 1.5px; display: flex; align-items: center; color: #fff; font-weight: 500; }
.red { background: #ef3350; width: 93.5px; padding-left: 8px; font-size: 6.55px; }
.red span { margin-left: 4.500px; }
.amber { background: #ffb70f; width: 75.5px; margin-left: 10.500px; padding-left: 7.500px; font-size: 6.59px; }
.amber span { margin-left: 3.500px; }
.pin { margin-left: 178.300px; }
.top span { white-space: nowrap; }
.t1 { margin-left: 5.700px; width: 100.800px; }
.t2 { margin-left: 5.700px; width: 46.500px; }
.t3 { margin-left: 3px; width: 24.500px; }
.cv { color: #666; }
.usr { margin-left: 7.200px; }
.flag { margin-left: 7.500px; }
.fca { font: 600 22px/20px Inter, sans-serif; color: #5f88cb; letter-spacing: .2px; margin: -3px 0 0 8.500px; transform: scaleX(1.14); transform-origin: 0 50%; }
.dealer h2 { font-size: 11.21px; font-weight: 500; line-height: 38px; height: 38px; padding: 1px 0 0 12.500px; }
.card { margin: 0 11px 0 12.700px; background: #fff; padding: 20.500px 21.300px 0; height: 363px; }
.lead { font-size: 8.48px; font-weight: 500; line-height: 12px; padding-top: .5px; }
.sub { font-size: 6.6px; line-height: 12px; margin: 1.500px 0 5.500px; }
.tbl { border: 1px solid #ececec; border-bottom: 0; }
.last { height: 24px; display: flex; align-items: center; justify-content: flex-end; padding: 0 20.500px 1px 0; }
.last button { margin-left: 6px; width: 43px; height: 13px; border: 1px solid #bfc2c5; background: #fff; display: flex; align-items: center; font-size: 5.8px; padding: 1px 0 0 3.500px; gap: 2.500px; }
.tr { display: grid; grid-template-columns: 96.500px 275.500px 65px 114px 1fr; height: 24px; line-height: 21.500px; border-bottom: 1px solid #f0f2f5; }
.tr > * { padding-left: 13.500px; border-left: 1px solid #e9edf2; }
.tr > :first-child { border-left: 0; }
.tr b { font-size: 6.95px; }
.tr:nth-child(odd) { background: #f2f2f2; }
.tr.th { background: #9b9b9b; height: 21.500px; font-weight: 700; font-size: 6.7px; border: 0; }
.tr.th > * { border-color: #b9b9b9; }
.go { background: #0bacdb; color: #fff; width: 40.500px; height: 13px; border-radius: 1px; display: flex; align-items: center; font-size: 5.7px; font-weight: 500; padding-left: 4px; gap: 1px; margin-top: 5.300px; line-height: 13px; }

/* work order search */
.search { width: 805px; height: 394px; margin-left: 34px; border-radius: 9px; background: #1a1b1d; border: 1px solid #6f7071; color: #e6e6e6; padding: 6px 0 0 18.500px; font-family: Lato, sans-serif; font-size: 9.6px; }
.search h2 { font-size: 12.03px; line-height: 16px; color: #7cc7f0; font-weight: 700; }
.help { display: block; }
.search .help { font-size: 9.59px; line-height: 14px; color: #62b2de; margin-top: 9.500px; }
.find { display: flex; align-items: center; height: 17px; margin-top: 5px; color: #fff; }
.find b { font-size: 11.76px; width: 346px; }
.find button { font: 9.77px/15px "Liberation Sans", sans-serif; height: 17px; }
.gold { background: #dfa520; border: 1px solid #e9b53c; width: 193px; }
.slate { background: #22282b; width: 195px; margin-left: 11px; }
.cols { display: grid; grid-template-columns: 245px 246px 271px; margin: 7.500px 0 0 4.300px; position: relative; }
.f { display: flex; align-items: center; }
.h20 { height: 20px; } .h21 { height: 21px; } .h22 { height: 22px; } .h23 { height: 23px; } .h24 { height: 24px; } .h25 { height: 25px; }
.f label { flex: none; display: flex; align-items: center; line-height: 12px; }
.c1 label { width: 75px; } .c2 label { width: 79px; } .c3 label { width: 89px; padding-left: 3px; }
.up { margin-top: -2px; } .dn { margin-top: 2px; }
.org { margin-left: 3px; }
.inp { height: 18px; background: #3a3a3b; border: 1px solid #5e5f60; border-radius: 2px; flex: none; font: 10.79px/16px "Liberation Sans", sans-serif; padding-left: 2px; color: #f2f2f2; }
.sel { height: 15px; background: #3a3a3b; border: 1px solid #6c6d6e; border-radius: 2px; flex: none; display: flex; align-items: center; font: 10.79px/13px "Liberation Sans", sans-serif; padding: 0 3.500px 0 3px; color: #f2f2f2; overflow: hidden; }
.sel span { flex: 1; overflow: hidden; }
.sel svg { width: 10px; height: 6px; margin-left: 3px; }
.off { background: #2a2b2c; border-color: #3c3d3e; margin-left: 2.500px; }
.off svg { color: #777; }
.w142 { width: 142px; } .w166 { width: 166px; } .w61 { width: 61px; } .w78 { width: 78px; } .w121 { width: 121px; } .w145 { width: 145px; } .w53 { width: 53.500px; } .w79 { width: 79px; } .w118 { width: 118px; } .w105 { width: 105px; } .w101 { width: 101px; }
.combo { width: 153px; height: 17px; border: 1px solid #3d3f41; background: #151617; display: flex; border-radius: 2px; overflow: hidden; font: 10.15px/18px "DejaVu Sans", sans-serif; color: #fff; padding-left: 3.500px; }
.combo span { flex: 1; }
.combo i { width: 22.500px; background: linear-gradient(#6d6d6d 50%, #858585 50%); color: #999; display: flex; align-items: center; justify-content: center; }
.vn { margin-left: 3px; }
.nx { margin-left: 2.500px; } .far { margin-left: 56px; }
.cal { margin-left: 3px; }
.c3 em { font-size: 14px; margin: 0 4.500px; color: #fff; }
.box { outline: 1px dashed #35383a; outline-offset: -1px; height: 67px; }
.sh { margin-left: 3.500px; }
.two { line-height: 10.500px !important; }
.cks { display: flex; }
.cks span { display: flex; align-items: center; width: 56.300px; }
.cks span:nth-child(2) { width: 72px; }
.cks i, .opts i { width: 10.500px; height: 10.500px; border: 1px solid #67686a; background: #39393a; border-radius: 2px; flex: none; margin: 0 3px 0 1px; }
.opts { padding: 7.700px 0 0 3px; }
.opts div { height: 20.800px; display: flex; align-items: center; }
.opts i { margin: -4px 0 0 9px; }
.mv { position: absolute; left: 741px; top: 98px; width: 21px; font: 9px/14.300px "Liberation Sans", sans-serif; text-align: center; color: #fff; }
.mv span { display: block; background: #dd1308; }
.mv span + span { background: #3a4246; color: #7cc7f0; }
.acts { display: flex; align-items: center; margin: 10.300px 0 0 188px; }
.acts button { font: 10.82px/15px "Liberation Sans", sans-serif; height: 17.500px; background: #6b6b6b; border: 1px solid #777; border-radius: 1px; width: 112.500px; color: #fff; }
.acts button:nth-of-type(2) { width: 41.500px; margin-left: 9.500px; }
.acts span { margin: 0 9.500px 0 10px; width: 11px; }
.acts button:nth-of-type(3) { width: 86.500px; }
.acts .cyan { width: 177px; margin-left: 9.500px; background: #02bdfb; border: 1px solid #c9eefc; }

/* user accounts */
.accounts { width: 746px; height: 565px; background: #fff; padding-left: 5px; color: #1c1c1c; font-size: 5.46px; }
.accounts h2 { font-size: 6.45px; line-height: 10px; padding-top: 6px; color: #2a72b0; }
.title { display: flex; margin: 17.500px 0 0 14px; width: 708px; }
.title h3 { flex: 1; margin-left: 5px; font-size: 6.44px; line-height: 8px; height: 13.500px; padding-top: 5.500px; color: #2a72b0; border-bottom: 1px solid #b9b9b9; }
.tools { display: grid; grid-template-columns: repeat(4, 177.700px); grid-auto-rows: 29.800px; margin: 6px 0 0 14.500px; height: 91px; }
.tool { display: flex; align-items: flex-start; }
.tool > div { margin-left: 3.500px; }
.tool b { display: block; font-size: 5.5px; line-height: 8px; color: #111; }
.tool p { line-height: 6px; color: #707070; padding-top: 1px; }
.tool p + p { padding-top: 0; }
.tall { margin-top: -2.500px; }
.accounts h4 { font-size: 5.95px; line-height: 8px; color: #111; }
.filters { display: flex; height: 39.500px; margin-top: 7px; padding-left: 2px; }
.g label, .pl { display: block; line-height: 7px; height: 6.500px; white-space: nowrap; }
.g em { color: #b5b5b5; margin-left: 4px; }
.left { width: 375.500px; }
.trio { display: flex; }
.ls { height: 9.500px; border: 1px solid #8f8f8f; border-radius: 1px; display: flex; align-items: center; font-size: 6.6px; line-height: 9px; padding: 0 2px 0 1.500px; color: #111; background: #fff; }
.ls span { flex: 1; overflow: hidden; padding-top: .7px; }
.ls svg, .ps svg { width: 4.500px; height: 3px; }
.w100 { width: 99.500px; } .w102 { width: 102px; } .w71 { width: 71.500px; }
.trio .g:nth-child(2) { margin: 0 4.500px 0 13.500px; }
.lc { width: 144.500px; height: 9.500px; border: 1px solid #bbb; display: flex; font-size: 6.9px; line-height: 8px; padding-left: 2.500px; border-radius: 1px; }
.lc span { flex: 1; }
.lc i { width: 14px; background: #eee; color: #888; display: flex; align-items: center; justify-content: center; border-left: 1px solid #ccc; }
.pl { margin-top: 1.800px; }
.perm { margin-top: 1px; width: 323px; height: 13.500px; border: 1px solid #a5a5a5; border-radius: 1.500px; display: flex; align-items: center; justify-content: space-between; padding: 0 3px 0 3.500px; font-size: 6.64px; color: #444; }
.fcol { display: flex; flex-direction: column; gap: 5px; }
.n1 { width: 116.500px; } .n2 { width: 114px; }
.run { width: 82px; height: 12.500px; flex: none; border: 1px solid #333; background: #efffd8; font-size: 6.63px; line-height: 11px; color: #111; margin-top: 5px; }
.bulk { display: block; margin: 8px 0 0 595px; width: 124px; height: 10.500px; background: #dce4fc; border: 1px solid #b9c4f0; font-size: 6.63px; line-height: 9px; color: #111; }
.users { margin-top: 2px; width: 721px; }
.u { display: grid; grid-template-columns: 146.700px 98px 90px 109px 12px 20.500px 13.500px 112.700px 57.800px 47.500px auto; height: 12.950px; align-items: center; padding: .8px 0 0 1.500px; border-bottom: 1px solid #f2f2f2; line-height: 7px; color: #151515; }
.u:nth-child(odd) { background: #e4e4e4; }
.u.dbl { height: 14.870px; }
.u.hd { background: #a5a5a5; height: 15px; font-weight: 700; font-size: 5.42px; border: 0; color: #111; }
.u small { display: block; font-size: 3.95px; line-height: 6px; }
.hd > span:nth-child(4) { line-height: 6.500px; }
.u a { color: #3a80bd; }
.dot { display: block; width: 4.500px; height: 4.500px; border-radius: 50%; background: #ee5a45; margin: -1px 0 0 2.500px; }

/* prime market area report */
.pma { width: 497px; height: 567px; background: #fff; margin-left: 35px; color: #333; font-size: 6.06px; display: flex; flex-direction: column; }
.pma header { height: 36px; flex: none; background: #c4c4c4; border-bottom: 1px solid #b5b5b5; display: flex; padding-left: 5px; }
.hb { margin-top: 9px; } .home { margin: 11.500px 11.500px 0 34.500px; }
.pma header b { font-size: 6.11px; line-height: 8px; margin-top: 13.700px; color: #111; }
.body { padding: 13.500px 0 0 14.500px; flex: none; height: 189.500px; }
.body h2 { font-size: 7.21px; line-height: 10px; color: #2a72b0; }
.body .help { line-height: 8px; margin-top: 6.200px; color: #3a80bd; }
.body h3 { font-size: 6.09px; line-height: 8px; }
.s1 { margin-top: 1.500px; } .s2 { margin-top: 12.500px; } .s3 { margin-top: 12.700px; }
.pr { display: grid; grid-template-columns: 57px 115.500px 57px auto; column-gap: 2px; align-items: center; color: #333; }
.pr.h20 { margin-top: -.7px; }
.pr label { text-align: right; justify-self: end; }
.h11 { height: 11px; margin-top: .7px; } .h9 { height: 9.500px; } .m3 { margin-top: 3px; } .m2 { margin-top: 1.500px; }
.ps { height: 9.500px; border: 1px solid #777; border-radius: 1px; display: flex; align-items: center; font-size: 7.4px; line-height: 9px; padding: 0 2px 0 2px; color: #111; }
.ps span { flex: 1; overflow: hidden; }
.ps svg { width: 6px; height: 4px; }
.w99 { width: 99.500px; } .w80 { width: 80px; } .w81 { width: 81px; } .w40 { width: 40px; } .w66 { width: 66px; }
.pi { height: 11px; border: 1px solid #666; border-radius: 1px; font-size: 7.4px; line-height: 9.500px; overflow: hidden; padding-left: 1px; color: #111; flex: none; }
.fx { display: flex; align-items: center; gap: 2.500px; }
.fx em { font-size: 8px; margin: 0 1px; }
.dealerpick p { display: flex; align-items: center; height: 8px; font-size: 5.54px; color: #808080; gap: 2.500px; padding-left: .5px; }
.pc { width: 200px; height: 12px; border: 1px solid #aaa; display: flex; font: 6.73px/10.500px "DejaVu Sans", sans-serif; color: #222; padding-left: 3px; border-radius: 1px; }
.pc span { flex: 1; }
.pc i { width: 15px; border-left: 1px solid #aaa; background: #ececec; color: #888; display: flex; align-items: center; justify-content: center; }
.rule { margin-top: 1px; width: 436px; border-top: 1px dashed #b5b5b5; }
.pb { display: flex; gap: 2.500px; margin: 7px 0 0 153.500px; }
.pb button { height: 11px; width: 50.500px; border: 1px solid #777; background: #efefef; font-size: 7.4px; line-height: 9px; color: #111; border-radius: 1px; }
.pb button + button { width: 26.500px; }
.blank { flex: 1; margin-left: 13px; background: #e1ddd9; }
.author { margin: auto 67.500px -5px auto; font: 700 19.940px/24px Roboto, sans-serif; color: #1f1f1f; }
</style>
